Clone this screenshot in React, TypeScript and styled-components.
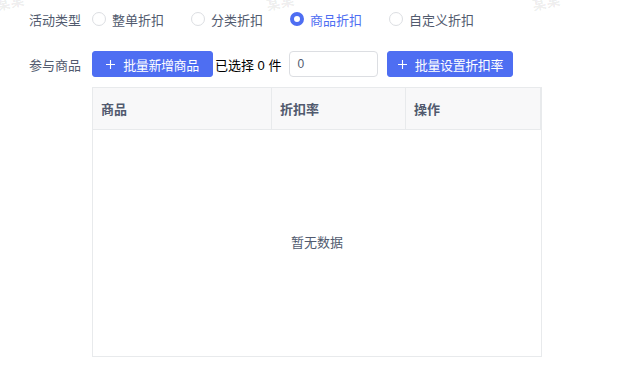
import React, { useState } from 'react';
import styled, { createGlobalStyle } from 'styled-components';

const GlobalStyle = createGlobalStyle`
  html, body {
    margin: 0;
    padding: 0;
    background: #fff;
  }
  body {
    font-family: "Liberation Sans", "Noto Sans CJK SC", sans-serif;
    font-size: 13px;
    color: #515a6e;
  }
  * {
    box-sizing: border-box;
  }
`;

const types = ['整单折扣', '分类折扣', '商品折扣', '自定义折扣'];
const columns = [
  { title: '商品', width: 179 },
  { title: '折扣率', width: 134 },
  { title: '操作', width: 137 },
];
const marks = [-4, 266, 532];

function App() {
  const [type, setType] = useState('商品折扣');
  const [rate, setRate] = useState('0');

  return (
    <Page>
      <GlobalStyle />
      <Row $height={38}>
        <Label>活动类型</Label>
        <RadioGroup>
          {types.map((t) => (
            <RadioItem key={t} $checked={t === type} onClick={() => setType(t)}>
              <RadioDot $checked={t === type} />
              {t}
            </RadioItem>
          ))}
        </RadioGroup>
      </Row>
      <Row $height={26} $top={13}>
        <Label>参与商品</Label>
        <Controls>
          <PrimaryButton $width={121}>
            <PlusIcon />
            批量新增商品
          </PrimaryButton>
          <Selected>已选择 0 件</Selected>
          <RateInput value={rate} onChange={(e) => setRate(e.target.value)} />
          <PrimaryButton $width={126}>
            <PlusIcon />
            批量设置折扣率
          </PrimaryButton>
        </Controls>
      </Row>
      <Table>
        <HeadRow>
          {columns.map((c) => (
            <HeadCell key={c.title} style={{ width: c.width }}>
              {c.title}
            </HeadCell>
          ))}
        </HeadRow>
        <Empty>暂无数据</Empty>
      </Table>
      {marks.map((x) => (
        <Mark key={x} style={{ left: x }}>
          某某
        </Mark>
      ))}
    </Page>
  );
}

function PlusIcon() {
  return (
    <svg width="9" height="9" viewBox="0 0 9 9" fill="none">
      <path d="M4.5 0v9M0 4.5h9" stroke="#fff" strokeWidth="1.1" />
    </svg>
  );
}

export default App;

const Page = styled.div`
  position: relative;
  width: 621px;
  height: 369px;
  overflow: hidden;
`;

const Row = styled.div<{ $height: number; $top?: number }>`
  display: flex;
  align-items: center;
  height: ${(p) => p.$height}px;
  margin-top: ${(p) => p.$top || 0}px;
`;

const Label = styled.div`
  width: 92px;
  padding-right: 11px;
  text-align: right;
  color: #515a6e;
`;

const RadioGroup = styled.div`
  display: flex;
  align-items: center;
`;

const RadioItem = styled.label<{ $checked: boolean }>`
  display: flex;
  align-items: center;
  margin-right: 27px;
  cursor: pointer;
  color: ${(p) => (p.$checked ? '#4e6ef2' : '#515a6e')};
`;

const RadioDot = styled.span<{ $checked: boolean }>`
  width: 14px;
  height: 14px;
  margin-right: 6px;
  border-radius: 50%;
  border: ${(p) => (p.$checked ? '4px solid #4e6ef2' : '1px solid #dcdee2')};
  background: #fff;
`;

const Controls = styled.div`
  display: flex;
  align-items: center;
  height: 26px;
`;

const PrimaryButton = styled.button<{ $width: number }>`
  display: flex;
  align-items: center;
  justify-content: center;
  gap: 8px;
  width: ${(p) => p.$width}px;
  height: 26px;
  padding: 0;
  border: 1px solid #4e6ef2;
  border-radius: 3px;
  background: #4e6ef2;
  color: #fff;
  font-family: inherit;
  font-size: 13px;
  letter-spacing: -0.4px;
  cursor: pointer;
`;

const Selected = styled.span`
  margin: 0 8px 0 2px;
  color: #000;
  font-size: 13px;
  white-space: nowrap;
`;

const RateInput = styled.input`
  width: 89px;
  height: 26px;
  margin-right: 9px;
  padding: 0 7px;
  border: 1px solid #dcdee2;
  border-radius: 4px;
  font-family: inherit;
  font-size: 12px;
  color: #515a6e;
  outline: none;
`;

const Table = styled.div`
  display: flex;
  flex-direction: column;
  width: 450px;
  height: 270px;
  margin: 10px 0 0 92px;
  border: 1px solid #e8eaec;
`;

const HeadRow = styled.div`
  display: flex;
  height: 42px;
  background: #f8f8f9;
  border-bottom: 1px solid #e8eaec;
`;

const HeadCell = styled.div`
  display: flex;
  align-items: center;
  padding-left: 8px;
  border-right: 1px solid #e8eaec;
  font-weight: bold;
  color: #515a6e;
  &:last-child {
    flex: 1;
  }
`;

const Empty = styled.div`
  flex: 1;
  display: flex;
  align-items: center;
  justify-content: center;
  padding-bottom: 4px;
  color: #515a6e;
`;

const Mark = styled.span`
  position: absolute;
  top: -8px;
  font-size: 14px;
  font-weight: bold;
  color: rgba(0, 0, 0, 0.08);
  transform: rotate(-12deg);
  pointer-events: none;
`;
